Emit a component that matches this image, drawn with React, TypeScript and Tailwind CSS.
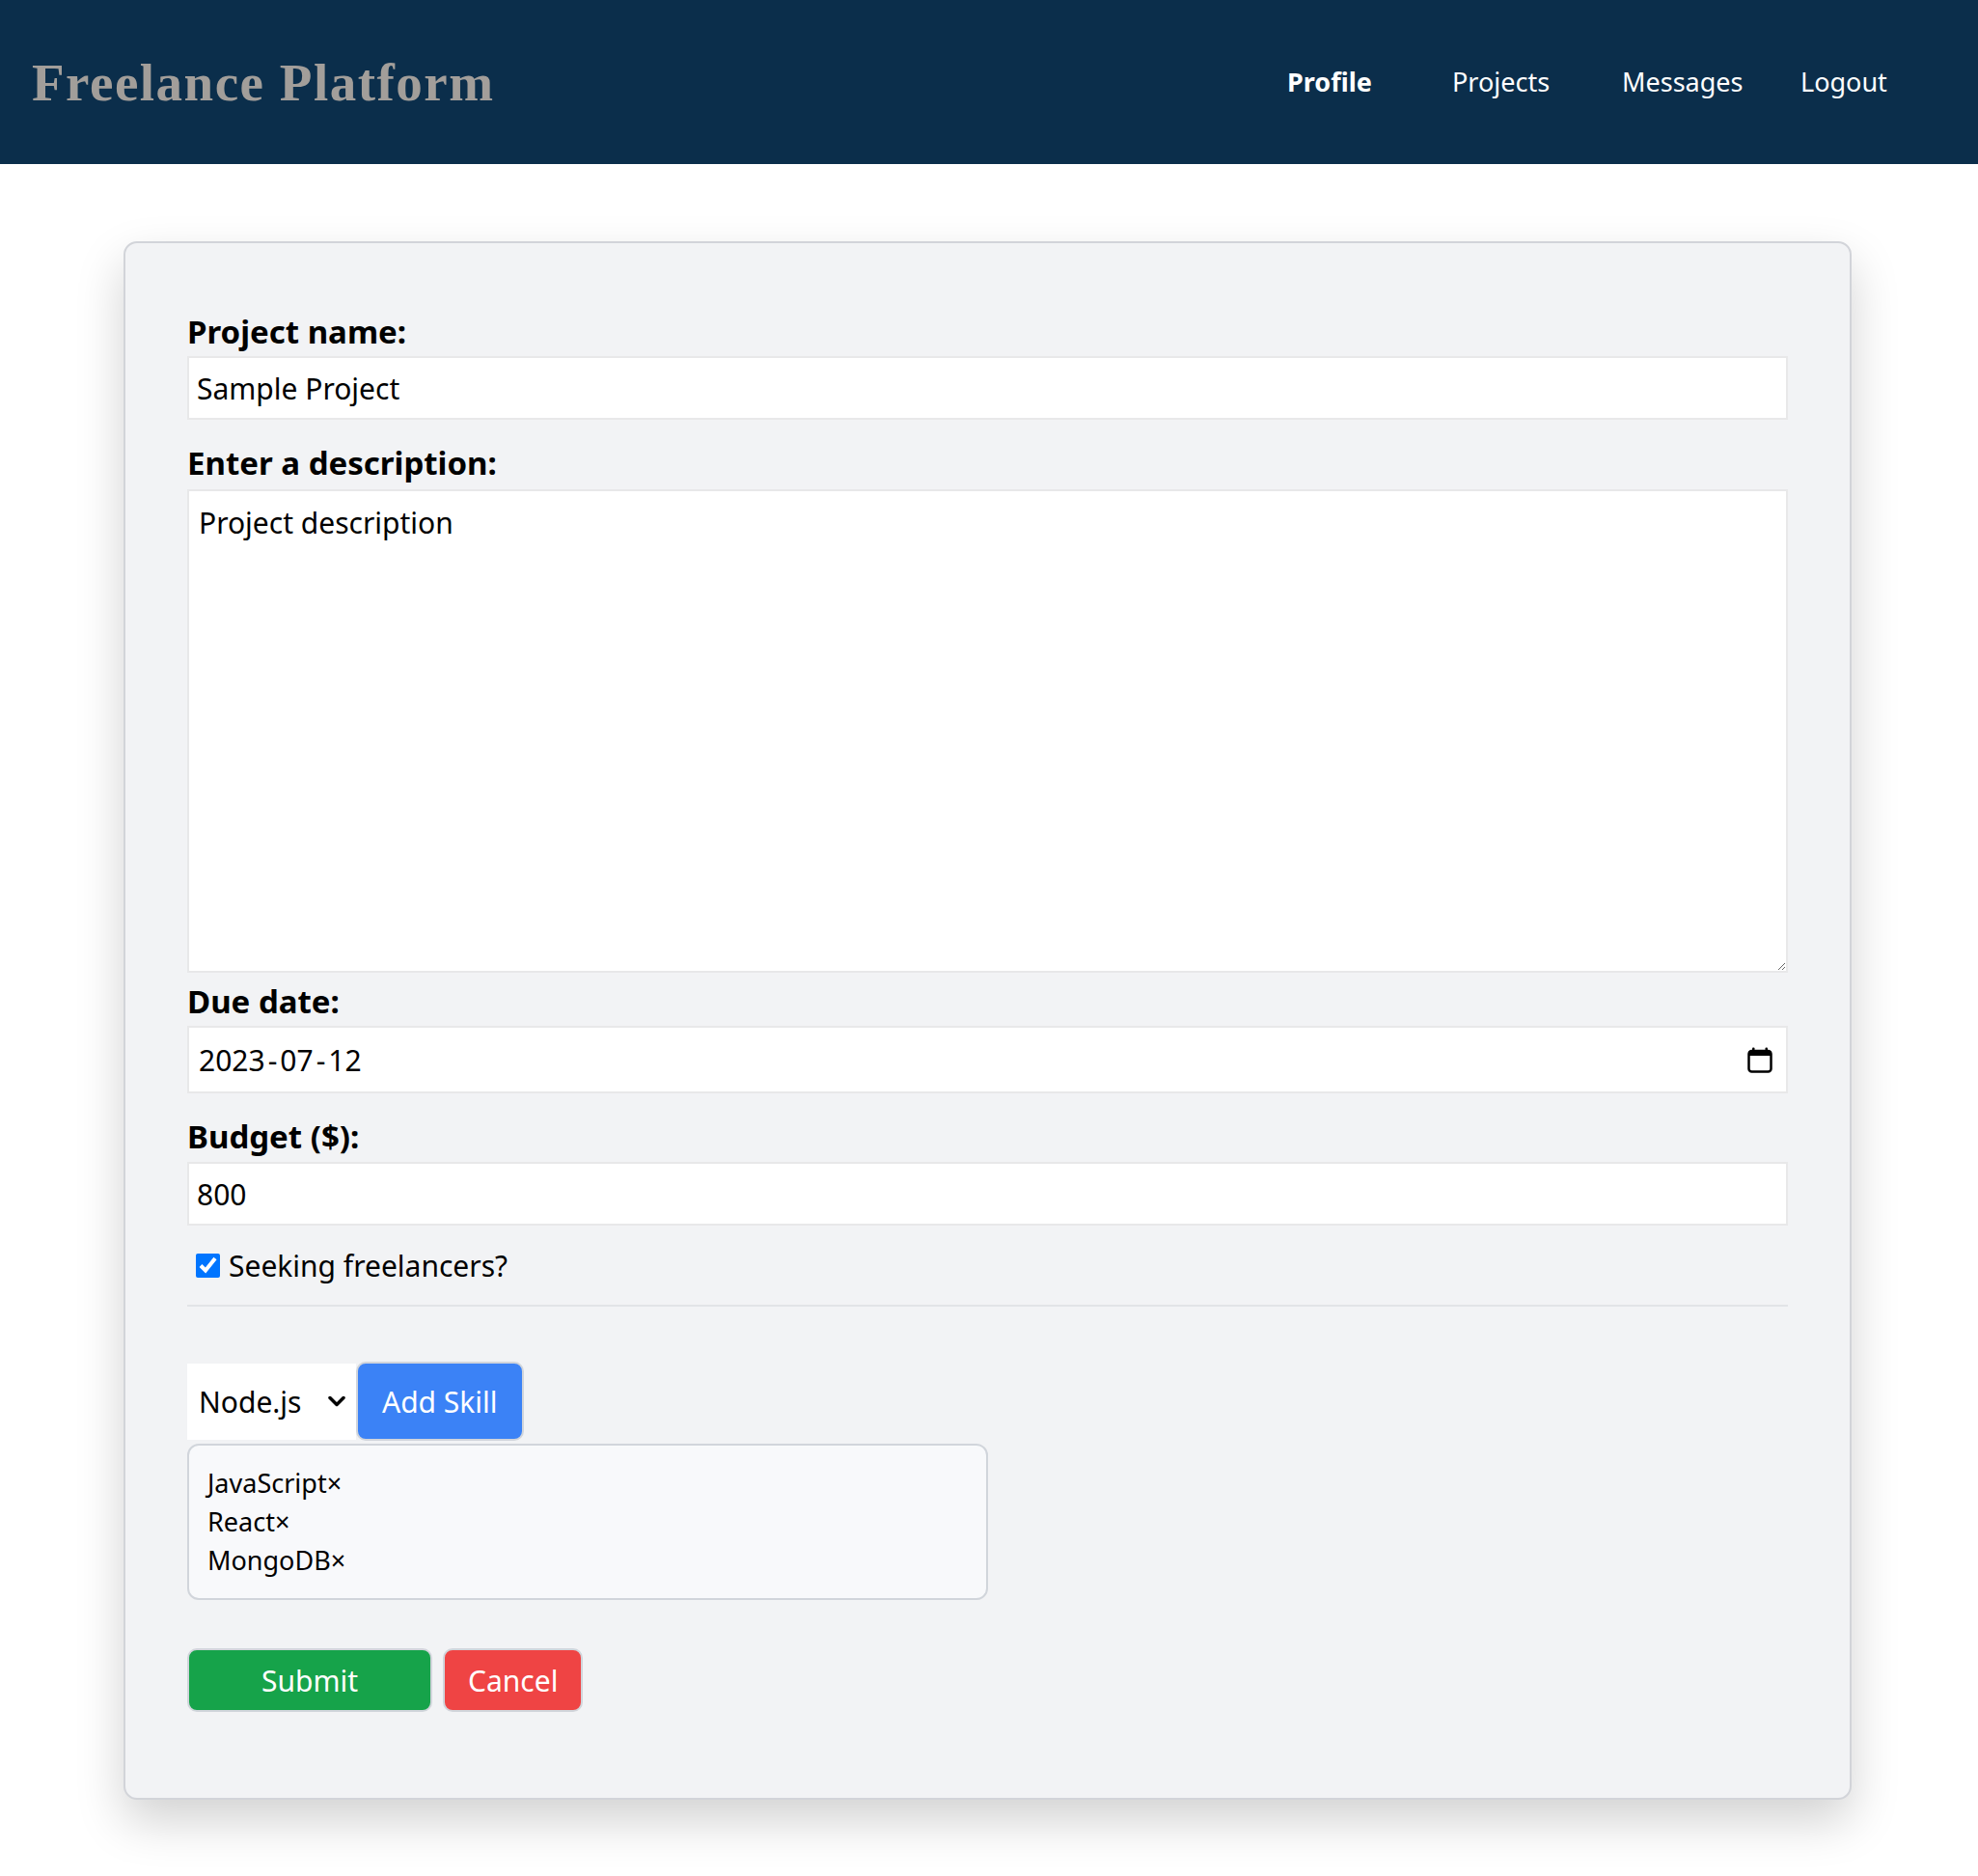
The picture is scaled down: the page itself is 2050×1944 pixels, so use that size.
import { useState } from "react";

const skills = ["JavaScript", "React", "MongoDB"];

function CalendarIcon() {
  return (
    <svg className="w-[26px] h-[28px]" viewBox="0 0 26 28" fill="none">
      <rect x="1.5" y="5" width="23" height="21.5" rx="3" stroke="black" strokeWidth="2.5" />
      <rect x="1.5" y="5" width="23" height="5" fill="black" />
      <rect x="5" y="1.5" width="2.5" height="5" rx="1" fill="black" />
      <rect x="18.5" y="1.5" width="2.5" height="5" rx="1" fill="black" />
    </svg>
  );
}

export default function App() {
  const [seeking, setSeeking] = useState(true);

  return (
    <div className="min-h-screen w-full bg-white font-['Noto_Sans',sans-serif] text-black pb-[78px]">
      {/* Header */}
      <header className="h-[170px] bg-[#0b2e4b] flex items-center justify-between pl-[33px] pr-[95px]">
        <h1 className="font-['Liberation_Serif',serif] font-bold text-[55px] tracking-[1.5px] text-[#a29e9a] leading-none">
          Freelance Platform
        </h1>
        <nav className="flex items-center text-white text-[27px]">
          <a className="w-[92px] text-center font-bold whitespace-nowrap">Profile</a>
          <a className="ml-[81px] w-[96px] text-center whitespace-nowrap">Projects</a>
          <a className="ml-[80px] w-[121px] text-center whitespace-nowrap">Messages</a>
          <a className="ml-[64px] w-[89px] text-center whitespace-nowrap">Logout</a>
        </nav>
      </header>

      {/* Form card */}
      <main className="mt-[80px] ml-[128px] w-[1791px] rounded-[14px] border-2 border-[#d2d4d9] bg-[#f2f3f5] px-[64px] pt-[70px] pb-[89px] shadow-[0_22px_50px_rgba(0,0,0,0.18)]">
        <label className="block text-[33px] leading-[44px] font-bold mb-[3px]">Project name:</label>
        <input
          defaultValue="Sample Project"
          className="block w-full h-[66px] bg-white border-2 border-[#e8e8e9] px-2 text-[30px] outline-none"
        />

        <label className="block mt-[23px] text-[33px] leading-[44px] font-bold mb-[5px]">Enter a description:</label>
        <textarea
          defaultValue="Project description"
          className="block w-full h-[501px] bg-white border-2 border-[#e8e8e9] px-[10px] pt-[12px] text-[30px] leading-[41px] outline-none"
        />

        <label className="block mt-[8px] text-[33px] leading-[44px] font-bold mb-[3px]">Due date:</label>
        <div className="flex items-center justify-between w-full h-[70px] bg-white border-2 border-[#e8e8e9] pl-[10px] pr-[14px] text-[30px]">
          <span className="flex items-center">
            <span>2023</span>
            <span className="mx-[3px]">-</span>
            <span>07</span>
            <span className="mx-[3px]">-</span>
            <span>12</span>
          </span>
          <CalendarIcon />
        </div>

        <label className="block mt-[23px] text-[33px] leading-[44px] font-bold mb-[4px]">Budget ($):</label>
        <input
          defaultValue="800"
          className="block w-full h-[66px] bg-white border-2 border-[#e8e8e9] px-2 text-[30px] outline-none"
        />

        <label className="mt-[21px] flex items-center h-[40px] text-[30px]">
          <input
            type="checkbox"
            checked={seeking}
            onChange={(e) => setSeeking(e.target.checked)}
            className="ml-[9px] w-[25px] h-[25px] accent-[#0075ff]"
          />
          <span className="ml-[9px]">Seeking freelancers?</span>
        </label>

        <hr className="mt-[21px] border-t-2 border-[#e2e4e7]" />

        {/* Skills */}
        <div className="mt-[57px] flex items-center">
          <div className="w-[175px] h-[79px] bg-white flex items-center justify-between pl-[12px] pr-[11px] text-[30px]">
            <span>Node.js</span>
            <svg className="w-[18px] h-[12px]" viewBox="0 0 18 12" fill="none">
              <path d="M2 2.5l7 7 7-7" stroke="black" strokeWidth="3.5" strokeLinecap="round" strokeLinejoin="round" />
            </svg>
          </div>
          <button className="h-[82px] rounded-[10px] border-2 border-[#d1d5db] bg-[#3b82f6] px-[25px] text-[30px] text-white">
            Add Skill
          </button>
        </div>

        <ul className="mt-[3px] w-1/2 rounded-[12px] border-2 border-[#d1d5db] bg-[#f8f9fb] px-[19px] py-[19px] text-[27px] leading-[40px]">
          {skills.map((s) => (
            <li key={s}>
              {s}
              <span>×</span>
            </li>
          ))}
        </ul>

        <div className="mt-[50px] flex">
          <button className="w-[254px] h-[66px] rounded-[10px] border-2 border-[#d1d5db] bg-[#16a34a] text-[30px] text-white">
            Submit
          </button>
          <button className="ml-[11px] h-[66px] rounded-[10px] border-2 border-[#d1d5db] bg-[#ef4444] px-[24px] text-[30px] text-white">
            Cancel
          </button>
        </div>
      </main>
    </div>
  );
}
